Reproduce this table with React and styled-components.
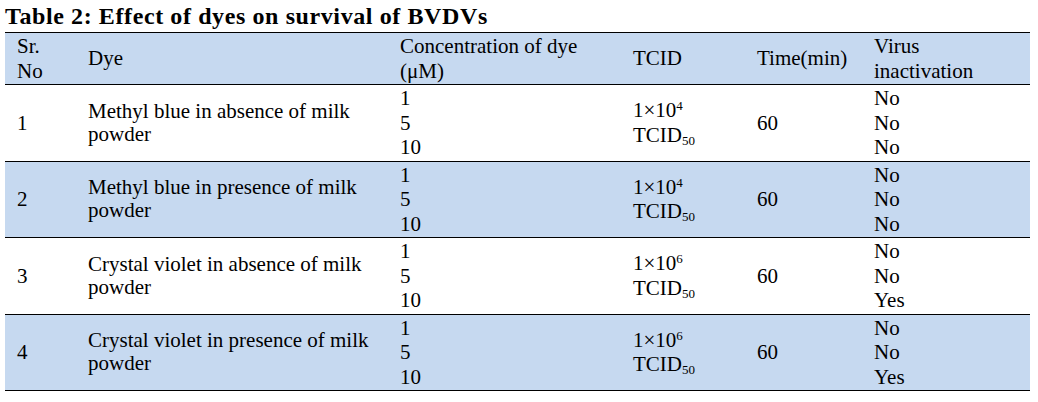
import React from 'react';
import styled, { createGlobalStyle } from 'styled-components';

const GlobalStyle = createGlobalStyle`
    body {
        margin: 0;
        background: #ffffff;
        font-family: "Liberation Serif", "DejaVu Serif", serif;
        color: #000000;
    }
`;

const Page = styled.div`
    width: 1025px;
    padding-left: 5px;
`;

const Title = styled.h2`
    margin: 0;
    font-size: 24px;
    line-height: 32px;
    font-weight: bold;
    letter-spacing: 0.6px;
`;

const Table = styled.table`
    width: 1025px;
    table-layout: fixed;
    border-collapse: collapse;
    font-size: 21px;
    line-height: 24.5px;
`;

const HeadCell = styled.th`
    background: #c6d9f0;
    border-top: 1px solid #000;
    border-bottom: 1px solid #000;
    padding: 1px 0 1px 12px;
    text-align: left;
    font-weight: normal;
    vertical-align: middle;
`;

const Cell = styled.td`
    background: ${props => props.shaded ? '#c6d9f0' : '#ffffff'};
    border-bottom: 1px solid #000;
    padding: 1px 0 1px 12px;
    vertical-align: middle;
    line-height: ${props => props.tight ? '23px' : '24.5px'};
`;

const Line = styled.div``;

const Sup = styled.span`
    font-size: 13px;
    vertical-align: 7px;
    line-height: 0;
`;

const Sub = styled.span`
    font-size: 13px;
    vertical-align: -3px;
    line-height: 0;
`;

const rows = [
    { no: 1, dye: 'Methyl blue in absence of milk powder', exp: 4, result: ['No', 'No', 'No'] },
    { no: 2, dye: 'Methyl blue in presence of milk powder', exp: 4, result: ['No', 'No', 'No'] },
    { no: 3, dye: 'Crystal violet in absence of milk powder', exp: 6, result: ['No', 'No', 'Yes'] },
    { no: 4, dye: 'Crystal violet in presence of milk powder', exp: 6, result: ['No', 'No', 'Yes'] },
];

const App = () => (
    <Page>
        <GlobalStyle />
        <Title>Table 2: Effect of dyes on survival of BVDVs</Title>
        <Table>
            <colgroup>
                <col style={{ width: 71 }} />
                <col style={{ width: 312 }} />
                <col style={{ width: 233 }} />
                <col style={{ width: 124 }} />
                <col style={{ width: 117 }} />
                <col style={{ width: 168 }} />
            </colgroup>
            <thead>
                <tr>
                    <HeadCell>Sr.<br />No</HeadCell>
                    <HeadCell>Dye</HeadCell>
                    <HeadCell>Concentration of dye<br />(μM)</HeadCell>
                    <HeadCell>TCID</HeadCell>
                    <HeadCell>Time(min)</HeadCell>
                    <HeadCell>Virus<br />inactivation</HeadCell>
                </tr>
            </thead>
            <tbody>
                {rows.map((row) => {
                    const shaded = row.no % 2 === 0;
                    return (
                        <tr key={row.no}>
                            <Cell shaded={shaded}>{row.no}</Cell>
                            <Cell shaded={shaded} tight>{row.dye}</Cell>
                            <Cell shaded={shaded}>
                                <Line>1</Line>
                                <Line>5</Line>
                                <Line>10</Line>
                            </Cell>
                            <Cell shaded={shaded}>
                                <Line>1×10<Sup>{row.exp}</Sup></Line>
                                <Line>TCID<Sub>50</Sub></Line>
                            </Cell>
                            <Cell shaded={shaded}>60</Cell>
                            <Cell shaded={shaded}>
                                {row.result.map((r, i) => <Line key={i}>{r}</Line>)}
                            </Cell>
                        </tr>
                    );
                })}
            </tbody>
        </Table>
    </Page>
);

export default App;
